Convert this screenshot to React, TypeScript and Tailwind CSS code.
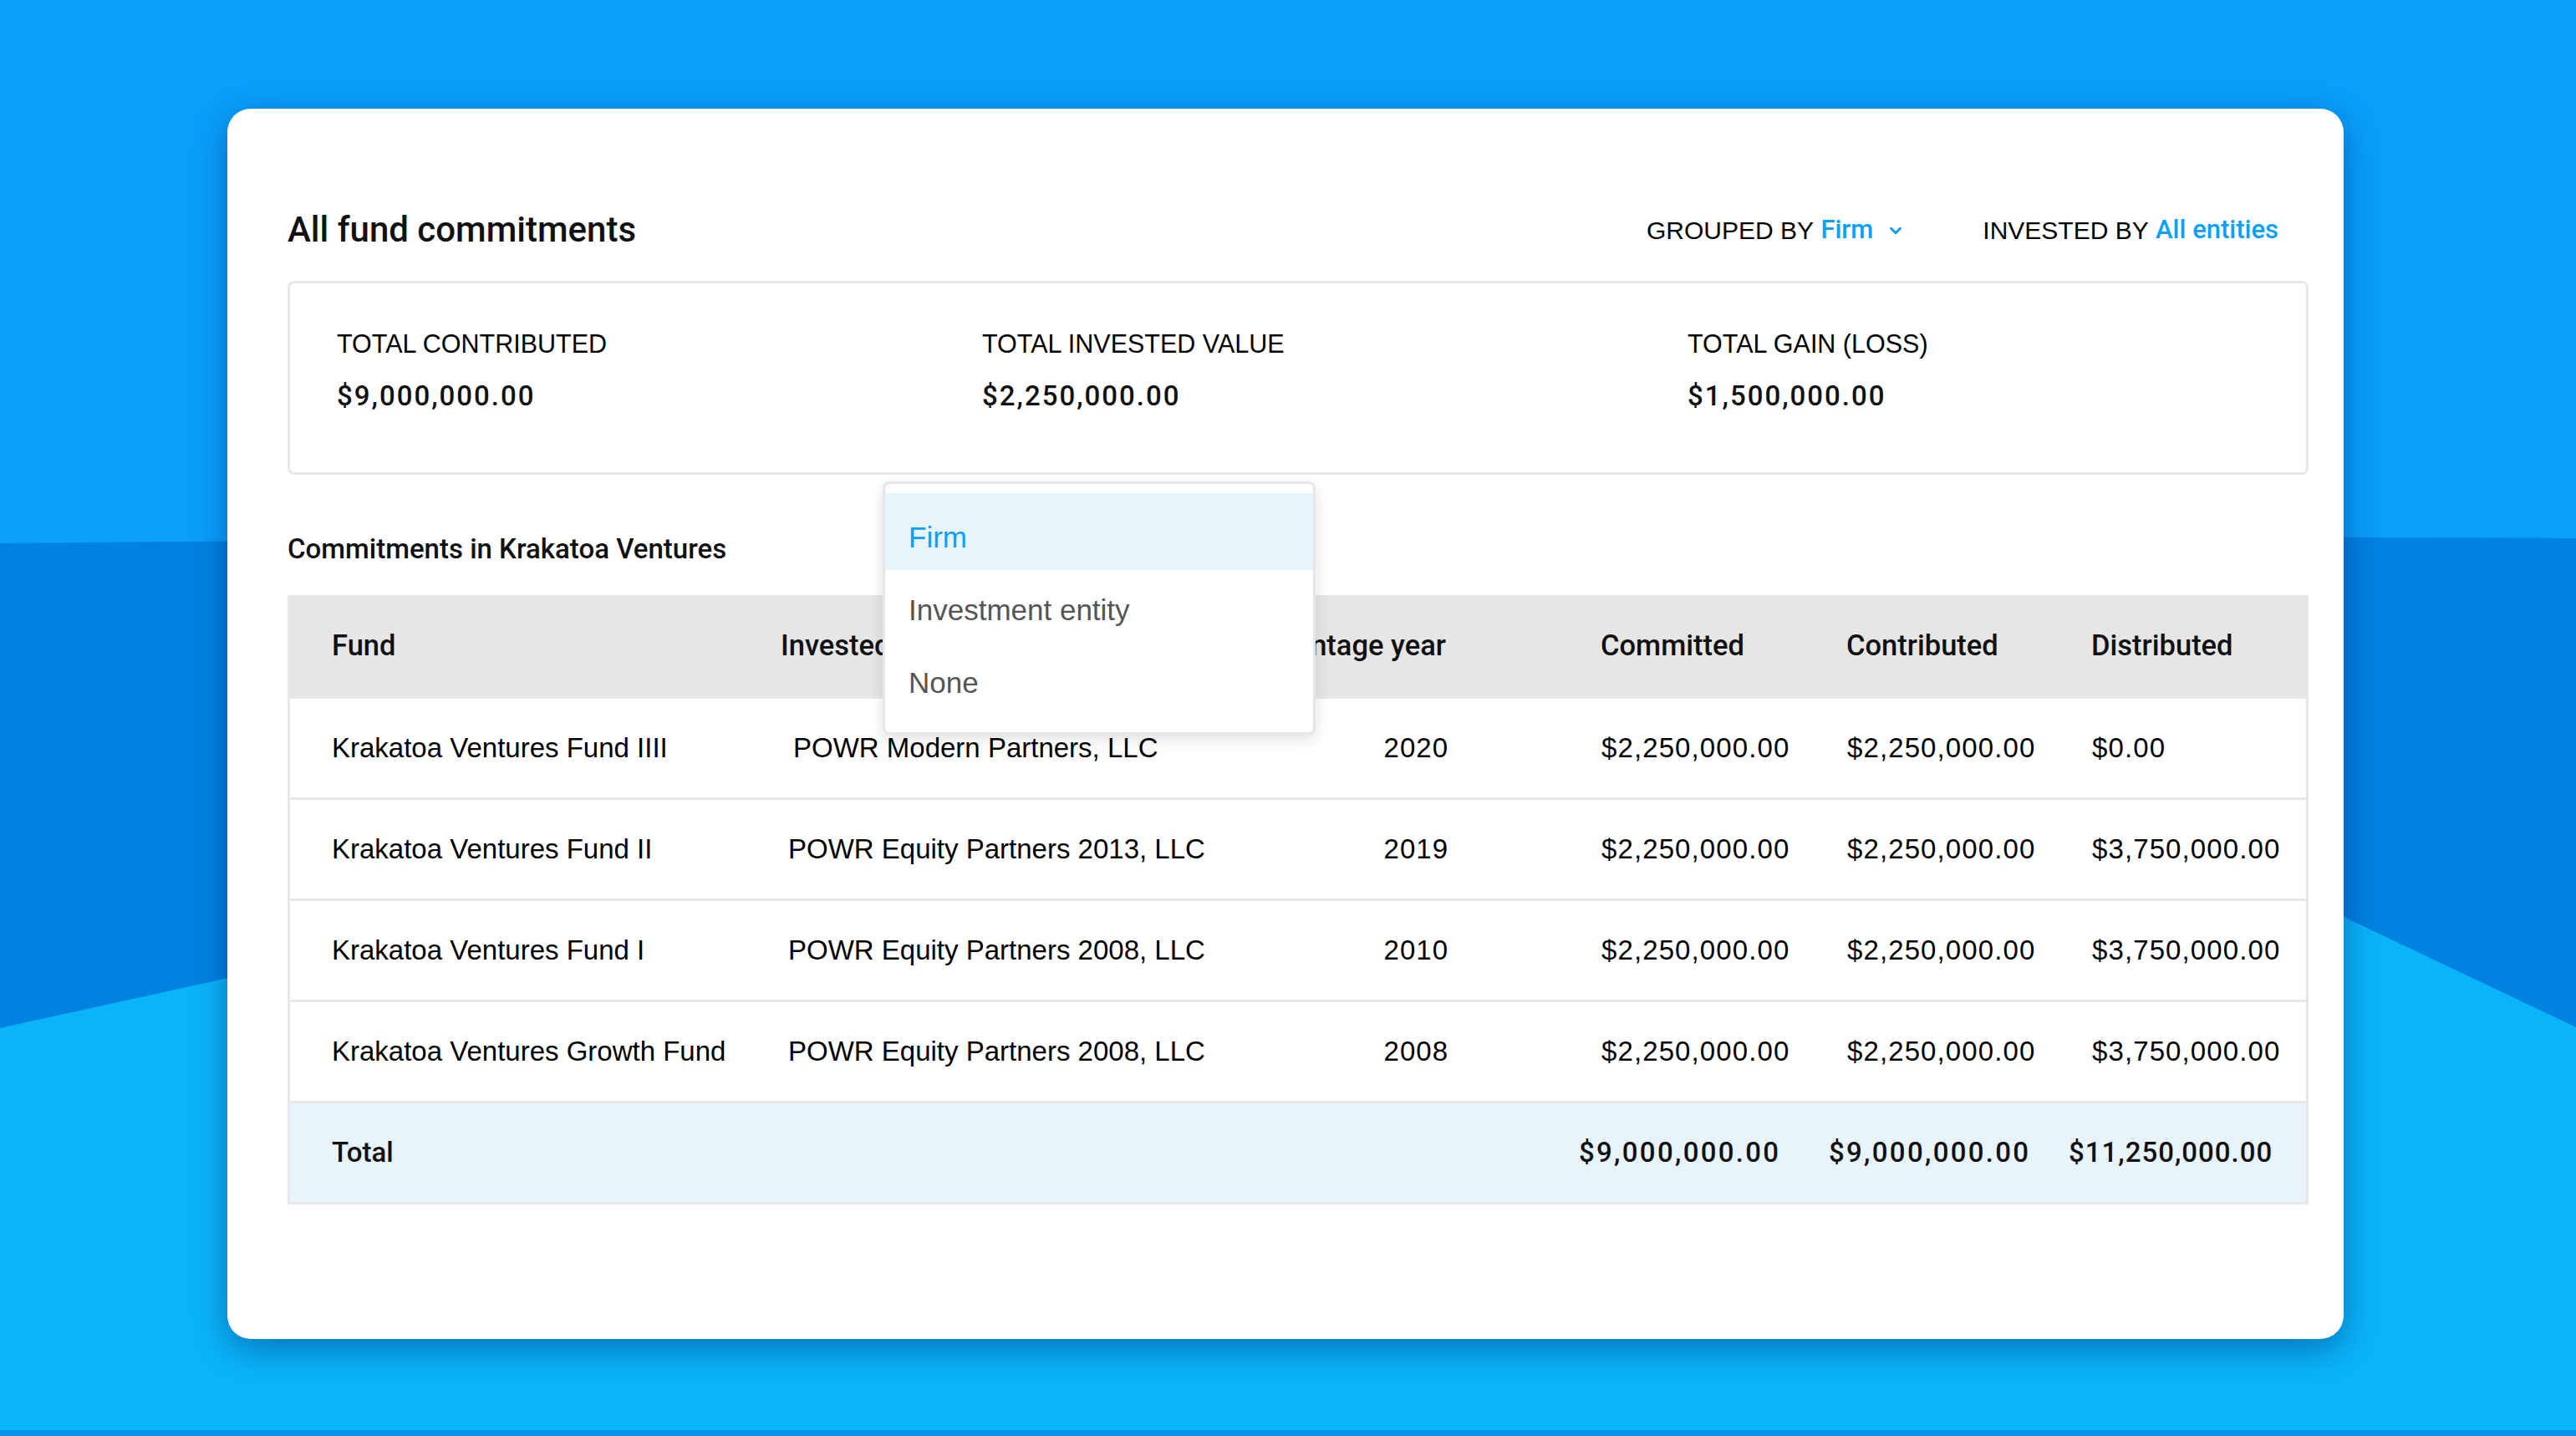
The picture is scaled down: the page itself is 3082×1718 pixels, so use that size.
import React from "react";
import { ChevronDown } from "lucide-react";

const rows = [
  {
    fund: "Krakatoa Ventures Fund IIII",
    inv: "POWR Modern Partners, LLC",
    invPad: true,
    year: "2020",
    committed: "$2,250,000.00",
    contributed: "$2,250,000.00",
    distributed: "$0.00",
  },
  {
    fund: "Krakatoa Ventures Fund II",
    inv: "POWR Equity Partners 2013, LLC",
    invPad: false,
    year: "2019",
    committed: "$2,250,000.00",
    contributed: "$2,250,000.00",
    distributed: "$3,750,000.00",
  },
  {
    fund: "Krakatoa Ventures Fund I",
    inv: "POWR Equity Partners 2008, LLC",
    invPad: false,
    year: "2010",
    committed: "$2,250,000.00",
    contributed: "$2,250,000.00",
    distributed: "$3,750,000.00",
  },
  {
    fund: "Krakatoa Ventures Growth Fund",
    inv: "POWR Equity Partners 2008, LLC",
    invPad: false,
    year: "2008",
    committed: "$2,250,000.00",
    contributed: "$2,250,000.00",
    distributed: "$3,750,000.00",
  },
];

function Background() {
  return (
    <svg
      className="absolute inset-0 h-full w-full"
      viewBox="0 0 3082 1718"
      preserveAspectRatio="none"
    >
      <rect x="0" y="0" width="3082" height="1718" fill="#099ffb" />
      <path d="M0 650 Q1541 636 3082 644 L3082 1718 L0 1718 Z" fill="#0082e1" />
      <path
        d="M0 1230 L300 1164 Q1600 860 2804 1097 L3082 1229 L3082 1718 L0 1718 Z"
        fill="#0ab4f9"
      />
      <rect x="0" y="1711" width="3082" height="7" fill="#0a92ea" />
    </svg>
  );
}

export default function App() {
  const reg = "font-['Liberation_Sans',Arial,sans-serif]";
  const med = "font-['Roboto',Arial,sans-serif] font-medium";
  return (
    <div className="relative h-[1718px] w-[3082px] overflow-hidden">
      <Background />
      <div className="relative pt-[130px] pl-[272px]">
        <div className="relative h-[1472px] w-[2532px] rounded-[28px] bg-white pl-[72px] pr-[42px] pt-[100px] shadow-[0_12px_40px_rgba(0,40,110,0.45)]">
          {/* header */}
          <div className="flex h-[90px] items-center justify-between pr-[36px] text-black">
            <div className={`${med} text-[42px] leading-[48px] text-[#111]`}>
              All fund commitments
            </div>
            <div className={`flex items-center ${reg} text-[30px]`}>
              <span>GROUPED BY&nbsp;</span>
              <span className={`${med} text-[31px] text-[#0a9ffb]`}>Firm</span>
              <ChevronDown
                className="ml-[16px] mt-[2px] text-[#0a9ffb]"
                size={22}
                strokeWidth={3.2}
              />
              <span className="ml-[93px]">INVESTED BY&nbsp;</span>
              <span className={`${med} text-[31px] text-[#0a9ffb]`}>All entities</span>
            </div>
          </div>

          {/* stats box */}
          <div className="mt-[16px] h-[232px] rounded-[8px] border-[3px] border-[#e8e8e8] pl-[56px] pt-[54px]">
            <div className="grid grid-cols-[772px_844px_1fr] text-black">
              {[
                ["TOTAL CONTRIBUTED", "$9,000,000.00"],
                ["TOTAL INVESTED VALUE", "$2,250,000.00"],
                ["TOTAL GAIN (LOSS)", "$1,500,000.00"],
              ].map(([l, v]) => (
                <div key={l} className="flex flex-col">
                  <div className={`${reg} text-[30.5px] leading-[36px]`}>{l}</div>
                  <div className={`${med} mt-[25px] text-[33px] leading-[40px] tracking-[2px] text-[#111]`}>
                    {v}
                  </div>
                </div>
              ))}
            </div>
          </div>

          {/* section title */}
          <div className={`${med} mt-[69px] text-[33px] leading-[40px] text-[#111]`}>
            Commitments in Krakatoa Ventures
          </div>

          {/* table */}
          <div className="mt-[35px] w-[2418px] border-x-[3px] border-b-[3px] border-[#e8e8e8] text-black">
            <div className={`grid h-[121px] grid-cols-[587px_500px_296px_185px_294px_293px_1fr] items-center bg-[#e6e6e6] ${med} text-[34.5px] text-[#111]`}>
              <div className="pl-[50px]">Fund</div>
              <div className="whitespace-nowrap">Invested by</div>
              <div className="whitespace-nowrap text-right">Vintage year</div>
              <div />
              <div>Committed</div>
              <div>Contributed</div>
              <div>Distributed</div>
            </div>
            {rows.map((r) => (
              <div
                key={r.fund}
                className={`grid h-[121px] grid-cols-[596px_651px_139px_183px_294px_293px_1fr] items-center border-t-[3px] border-[#e8e8e8] ${reg} text-[33px]`}
              >
                <div className="whitespace-nowrap pl-[50px]">{r.fund}</div>
                <div className={`whitespace-nowrap ${r.invPad ? "pl-[6px]" : ""}`}>{r.inv}</div>
                <div className="text-right tracking-[1px]">{r.year}</div>
                <div />
                <div className="whitespace-nowrap tracking-[1.1px]">{r.committed}</div>
                <div className="whitespace-nowrap tracking-[1.1px]">{r.contributed}</div>
                <div className="whitespace-nowrap tracking-[1.1px]">{r.distributed}</div>
              </div>
            ))}
            <div
              className={`grid h-[121px] grid-cols-[1542px_299px_287px_1fr] items-center border-t-[3px] border-[#e8e8e8] bg-[#e8f4fc] ${med} text-[33px] text-[#111]`}
            >
              <div className="pl-[50px]">Total</div>
              <div className="whitespace-nowrap tracking-[2.3px]">$9,000,000.00</div>
              <div className="whitespace-nowrap tracking-[2.3px]">$9,000,000.00</div>
              <div className="whitespace-nowrap tracking-[1px]">$11,250,000.00</div>
            </div>
          </div>

          {/* dropdown */}
          <div className="absolute left-[784px] top-[446px] w-[518px] rounded-[8px] border-[3px] border-[#e6e6e6] bg-white pb-[20px] pt-[11px] shadow-[0_6px_18px_rgba(0,0,0,0.12)]">
            <div className={`flex h-[92px] items-center bg-[#e8f4fc] pl-[28px] pt-[14px] ${reg} text-[35px] text-[#0a9ffb]`}>
              Firm
            </div>
            <div className={`flex h-[87px] items-center pl-[28px] pt-[9px] ${reg} text-[35px] text-[#555]`}>
              Investment entity
            </div>
            <div className={`flex h-[87px] items-center pl-[28px] pt-[9px] ${reg} text-[35px] text-[#555]`}>
              None
            </div>
          </div>
        </div>
      </div>
    </div>
  );
}
